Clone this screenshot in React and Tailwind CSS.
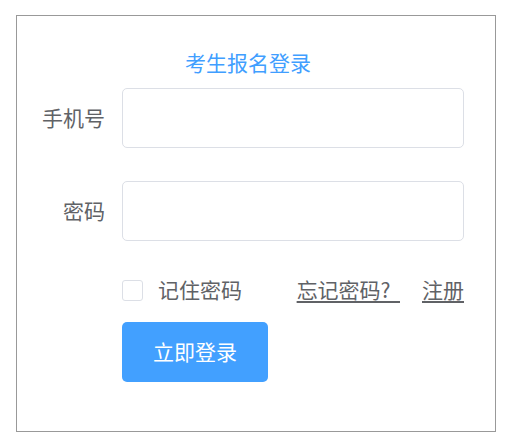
export default function App() {
    return (
        <div className="min-h-screen bg-white pt-[15px] pl-[16px]" style={{ fontFamily: '"Noto Sans CJK SC", "Noto Sans", sans-serif' }}>
            <div className="w-[480px] h-[417px] border border-[#999999] bg-white">
                {/* 标题 */}
                <div className="mt-[32px] pl-[168px] h-[28px] leading-[28px] text-[21px] text-[#409eff]">
                    考生报名登录
                </div>

                <form className="mt-[12px]">
                    {/* 手机号 */}
                    <div className="flex items-center">
                        <label className="w-[88px] text-right text-[21px] text-[#606266]">手机号</label>
                        <input
                            type="text"
                            className="ml-[17px] w-[342px] h-[60px] rounded-[5px] border border-[#dcdfe6] outline-none px-4 text-[18px]"
                        />
                    </div>

                    {/* 密码 */}
                    <div className="flex items-center mt-[33px]">
                        <label className="w-[88px] text-right text-[21px] text-[#606266]">密码</label>
                        <input
                            type="password"
                            className="ml-[17px] w-[342px] h-[60px] rounded-[5px] border border-[#dcdfe6] outline-none px-4 text-[18px]"
                        />
                    </div>

                    {/* 记住密码 / 忘记密码 / 注册 */}
                    <div className="flex items-center h-[20px] mt-[39px] ml-[105px] w-[342px] text-[21px] text-[#606266]">
                        <span className="w-[21px] h-[21px] rounded-[3px] border border-[#dcdfe6] bg-white"></span>
                        <span className="ml-[15px]">记住密码</span>
                        <a href="#" className="ml-auto underline decoration-2 underline-offset-[3px] text-[#606266]">忘记密码?&nbsp;&nbsp;</a>
                        <a href="#" className="ml-[22px] underline decoration-2 underline-offset-[3px] text-[#606266]">注册</a>
                    </div>

                    {/* 登录按钮 */}
                    <div className="ml-[105px] mt-[22px]">
                        <button
                            type="button"
                            className="w-[146px] h-[60px] rounded-[5px] bg-[#42a0ff] text-white text-[21px]"
                        >
                            立即登录
                        </button>
                    </div>
                </form>
            </div>
        </div>
    );
}
